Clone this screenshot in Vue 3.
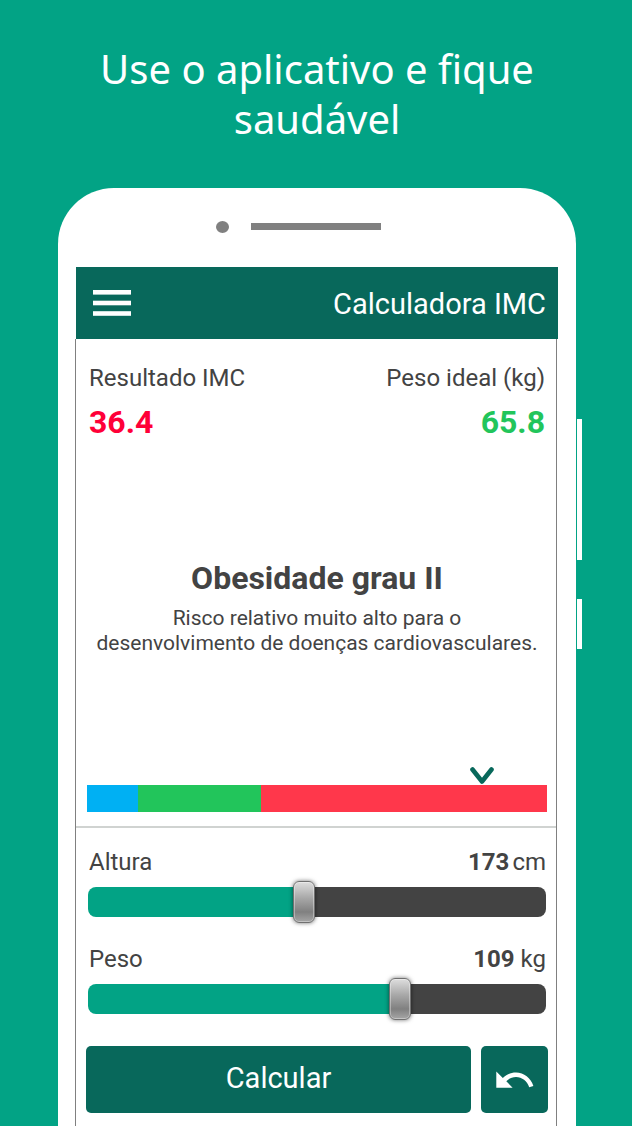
<template>
  <main class="promo">
    <h1 class="promo-title">Use o aplicativo e fique saudável</h1>

    <div class="phone">
      <div class="phone-top">
        <span class="camera"></span>
        <span class="speaker"></span>
      </div>

      <header class="app-bar">
        <button class="menu-btn" type="button" aria-label="Menu">
          <svg width="38" height="26" viewBox="0 0 38 26" fill="#fff">
            <rect width="38" height="4.6" />
            <rect y="10.7" width="38" height="4.6" />
            <rect y="21.2" width="38" height="4.6" />
          </svg>
        </button>
        <span class="app-name">Calculadora IMC</span>
      </header>

      <div class="screen">
        <section class="results">
          <div class="result">
            <span class="label">Resultado IMC</span>
            <strong class="value high">{{ result.bmi }}</strong>
          </div>
          <div class="result right">
            <span class="label">Peso ideal (kg)</span>
            <strong class="value ideal">{{ result.ideal }}</strong>
          </div>
        </section>

        <section class="diagnosis">
          <h2>{{ result.title }}</h2>
          <p>{{ result.text }}</p>
        </section>

        <div class="scale">
          <svg
            class="marker"
            :style="{ left: result.position + '%' }"
            width="24"
            height="18"
            viewBox="0 0 24 18"
          >
            <path
              d="M2.5 2.5 12 14.5 21.5 2.5"
              fill="none"
              stroke="#08685b"
              stroke-width="4.6"
              stroke-linecap="round"
              stroke-linejoin="round"
            />
          </svg>
          <span
            v-for="zone in zones"
            :key="zone.name"
            :class="zone.name"
            :style="{ flexGrow: zone.size }"
          ></span>
        </div>

        <form class="controls" @submit.prevent="calculate">
          <div v-for="f in fields" :key="f.id" class="field">
            <div class="field-head">
              <label class="label" :for="f.id">{{ f.label }}</label>
              <output class="label" :class="f.id" :for="f.id">
                <b>{{ f.value }}</b><span class="unit">{{ f.unit }}</span>
              </output>
            </div>
            <input
              :id="f.id"
              v-model.number="f.value"
              type="range"
              :min="f.min"
              :max="f.max"
              :style="{ '--fill': fill(f) + '%' }"
            />
          </div>

          <div class="actions">
            <button class="btn btn-main" type="submit">Calcular</button>
            <button
              class="btn btn-undo"
              type="button"
              aria-label="Desfazer"
              @click="reset"
            >
              <svg width="38" height="18" viewBox="0 0 38 18" fill="#fff">
                <path
                  d="M0.3 0.5 6.8 7C10.8 3.4 15.2 1.5 20 1.5 28 1.5 34.8 7 37.4 14.9L33.2 16.3C31.2 10.3 26 6.1 20 6.1 16.3 6.1 12.9 7.5 10.3 10.2L16.6 16.8H0.3Z"
                />
              </svg>
            </button>
          </div>
        </form>
      </div>
    </div>
  </main>
</template>

<script setup>
import { reactive } from "vue";

const zones = [
  { name: "under", size: 51 },
  { name: "normal", size: 123 },
  { name: "over", size: 286 },
];

const result = reactive({
  bmi: "36.4",
  ideal: "65.8",
  title: "Obesidade grau II",
  text: "Risco relativo muito alto para o desenvolvimento de doenças cardiovasculares.",
  position: 85.8,
});

const fields = reactive([
  { id: "altura", label: "Altura", unit: "cm", value: 173, min: 100, max: 255 },
  { id: "peso", label: "Peso", unit: "kg", value: 109, min: 40, max: 140 },
]);

function fill(f) {
  return ((f.value - f.min) / (f.max - f.min)) * 100;
}

function calculate() {
  const m = fields[0].value / 100;
  result.bmi = (fields[1].value / (m * m)).toFixed(1);
  result.ideal = (22 * m * m).toFixed(1);
}

function reset() {
  fields[0].value = 173;
  fields[1].value = 109;
  calculate();
}
</script>

<style>
body {
  margin: 0;
  background: #02a385;
}
</style>

<style scoped>
.promo {
  box-sizing: border-box;
  min-height: 100vh;
  display: flex;
  flex-direction: column;
  padding: 44px 56px 0 58px;
  background: #02a385;
  color: #434343;
  font-family: Roboto, "Liberation Sans", sans-serif;
}
.promo-title {
  margin: 0 0 44px;
  padding: 0 32px;
  color: #fff;
  font-family: "Noto Sans", "Open Sans", sans-serif;
  font-size: 40px;
  font-weight: 400;
  line-height: 50px;
  text-align: center;
}
.phone {
  position: relative;
  flex: 1;
  display: flex;
  flex-direction: column;
  padding: 0 18px;
  background: #fff;
  border-radius: 56px 56px 0 0;
}
.phone::before,
.phone::after {
  content: "";
  position: absolute;
  right: -6px;
  width: 5px;
  background: #fff;
}
.phone::before {
  top: 231px;
  height: 141px;
}
.phone::after {
  top: 411px;
  height: 50px;
}
.phone-top {
  display: flex;
  align-items: center;
  justify-content: center;
  gap: 22px;
  height: 77px;
  padding: 0 38px 2px 0;
}
.camera {
  width: 13px;
  height: 12px;
  border-radius: 50%;
  background: #808080;
}
.speaker {
  width: 130px;
  height: 7px;
  background: #808080;
}
.app-bar {
  display: flex;
  align-items: center;
  justify-content: space-between;
  height: 72px;
  padding: 0 12px 0 17px;
  background: #08685b;
  color: #fff;
}
.menu-btn {
  display: flex;
  padding: 0;
  border: none;
  background: transparent;
  cursor: pointer;
}
.app-name {
  padding-top: 2px;
  font-size: 29px;
  line-height: 32px;
}
.screen {
  flex: 1;
  display: flex;
  flex-direction: column;
  margin: 0 1px 0 -1px;
  border: solid #808080;
  border-width: 0 1px;
}
.results {
  display: flex;
  justify-content: space-between;
  padding: 25px 11px 0 13px;
}
.result {
  display: flex;
  flex-direction: column;
  gap: 10px;
}
.right {
  text-align: right;
}
.label {
  font-size: 24px;
  line-height: 28px;
}
.value {
  font-size: 32px;
  line-height: 40px;
}
.high {
  color: #ff0038;
}
.ideal {
  color: #22c55b;
}
.diagnosis {
  flex: 1;
  display: flex;
  flex-direction: column;
  justify-content: center;
  padding: 0 15px 14px 17px;
  text-align: center;
}
.diagnosis h2 {
  margin: 0 0 8px;
  font-size: 32px;
  line-height: 40px;
}
.diagnosis p {
  margin: 0;
  font-size: 21px;
  line-height: 25px;
}
.scale {
  position: relative;
  display: flex;
  height: 27px;
  margin: 0 9px 14px 11px;
}
.marker {
  position: absolute;
  bottom: 100%;
  transform: translateX(-50%);
}
.under {
  background: #00b0f3;
}
.normal {
  background: #22c55b;
}
.over {
  background: #ff374b;
}
.controls {
  padding: 20px 8px 13px 10px;
  border-top: 2px solid #d0d3d1;
}
.field {
  display: flex;
  flex-direction: column;
  gap: 4px;
  margin: 0 2px 21px;
}
.field-head {
  display: flex;
  justify-content: space-between;
  padding-left: 1px;
}
.altura .unit {
  margin-left: 3px;
}
.peso .unit {
  margin-left: 6px;
}
input[type="range"] {
  appearance: none;
  width: 100%;
  height: 44px;
  margin: 0;
  background: transparent;
  cursor: pointer;
}
input[type="range"]::-webkit-slider-runnable-track {
  height: 30px;
  border-radius: 8px;
  background: linear-gradient(
    90deg,
    #02a385 var(--fill),
    #434343 var(--fill)
  );
}
input[type="range"]::-webkit-slider-thumb {
  appearance: none;
  box-sizing: border-box;
  width: 22px;
  height: 42px;
  margin-top: -6px;
  border: 1px solid #707070;
  border-radius: 6px;
  background: linear-gradient(#dedede, #a8a8a8 40%, #808080 75%, #a6a6a6);
  box-shadow:
    inset 0 0 0 1px rgba(255, 255, 255, 0.35),
    0 0 4px rgba(0, 0, 0, 0.55);
}
.actions {
  display: flex;
  gap: 10px;
  margin-top: 25px;
}
.btn {
  display: flex;
  align-items: center;
  justify-content: center;
  height: 67px;
  padding: 0 0 4px;
  border: none;
  border-radius: 5px;
  background: #08685b;
  color: #fff;
  font-family: inherit;
  font-size: 29px;
  cursor: pointer;
}
.btn-main {
  flex: 1;
}
.btn-undo {
  width: 67px;
  padding: 0;
}
</style>
